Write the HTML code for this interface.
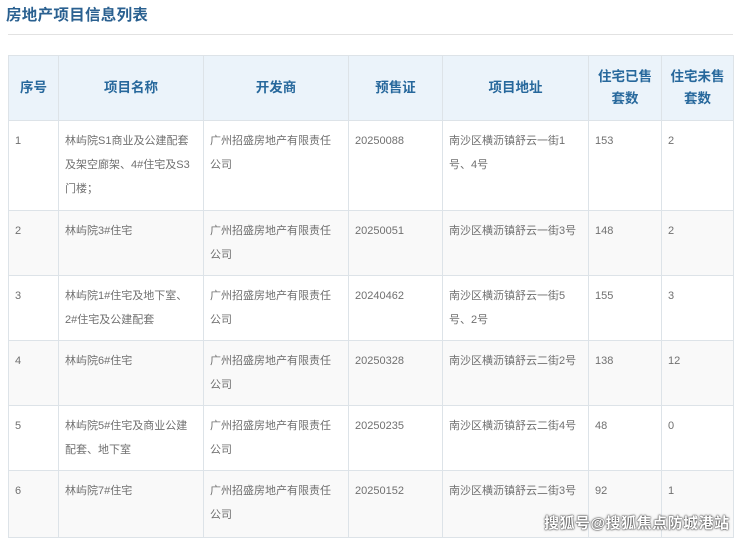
<!DOCTYPE html>
<html><head><meta charset="utf-8"><style>
body{margin:0;width:740px;height:541px;background:#fff;overflow:hidden;position:relative;font-family:"Liberation Sans","Noto Sans CJK SC",sans-serif}
.t{position:absolute;left:6px;top:3px;font-size:15.5px;font-weight:bold;color:#2a6090;letter-spacing:0.3px}
.hr{position:absolute;left:8px;top:34px;width:725px;height:1px;background:#e2e2e2}
table{position:absolute;left:8px;top:55px;border-collapse:collapse;table-layout:fixed}
td,th{border:1px solid #dde3e8;padding:0 6px;vertical-align:top;font-size:11px;color:#707070;line-height:24px;word-break:break-all}
th{background:#ebf3fa;color:#27689c;font-size:13.5px;font-weight:bold;vertical-align:middle;text-align:center;line-height:22px;height:64px}
td{padding-top:8px}
tr.g td{background:#f9f9f9}
.wm{position:absolute;left:544px;top:512px;font-size:15px;font-weight:bold;color:#fff;text-shadow:0 0 2px #333,0 0 1px #000;letter-spacing:0.5px}
</style></head><body>
<div class="t">房地产项目信息列表</div>
<div class="hr"></div>
<table>
<colgroup><col style="width:50px"><col style="width:145px"><col style="width:145px"><col style="width:94px"><col style="width:146px"><col style="width:73px"><col style="width:72px"></colgroup>
<tr><th>序号</th><th>项目名称</th><th>开发商</th><th>预售证</th><th>项目地址</th><th>住宅已售<br>套数</th><th>住宅未售<br>套数</th></tr>
<tr style="height:90px"><td>1</td><td>林屿院S1商业及公建配套<br>及架空廊架、4#住宅及S3<br>门楼；</td><td>广州招盛房地产有限责任<br>公司</td><td>20250088</td><td>南沙区横沥镇舒云一街1<br>号、4号</td><td>153</td><td>2</td></tr>
<tr class="g" style="height:65px"><td>2</td><td>林屿院3#住宅</td><td>广州招盛房地产有限责任<br>公司</td><td>20250051</td><td style="white-space:nowrap">南沙区横沥镇舒云一街3号</td><td>148</td><td>2</td></tr>
<tr style="height:65px"><td>3</td><td>林屿院1#住宅及地下室、<br>2#住宅及公建配套</td><td>广州招盛房地产有限责任<br>公司</td><td>20240462</td><td>南沙区横沥镇舒云一街5<br>号、2号</td><td>155</td><td>3</td></tr>
<tr class="g" style="height:65px"><td>4</td><td>林屿院6#住宅</td><td>广州招盛房地产有限责任<br>公司</td><td>20250328</td><td style="white-space:nowrap">南沙区横沥镇舒云二街2号</td><td>138</td><td>12</td></tr>
<tr style="height:65px"><td>5</td><td>林屿院5#住宅及商业公建<br>配套、地下室</td><td>广州招盛房地产有限责任<br>公司</td><td>20250235</td><td style="white-space:nowrap">南沙区横沥镇舒云二街4号</td><td>48</td><td>0</td></tr>
<tr class="g" style="height:67px"><td>6</td><td>林屿院7#住宅</td><td>广州招盛房地产有限责任<br>公司</td><td>20250152</td><td style="white-space:nowrap">南沙区横沥镇舒云二街3号</td><td>92</td><td>1</td></tr>
</table>
<div class="wm">搜狐号@搜狐焦点防城港站</div>
</body></html>
